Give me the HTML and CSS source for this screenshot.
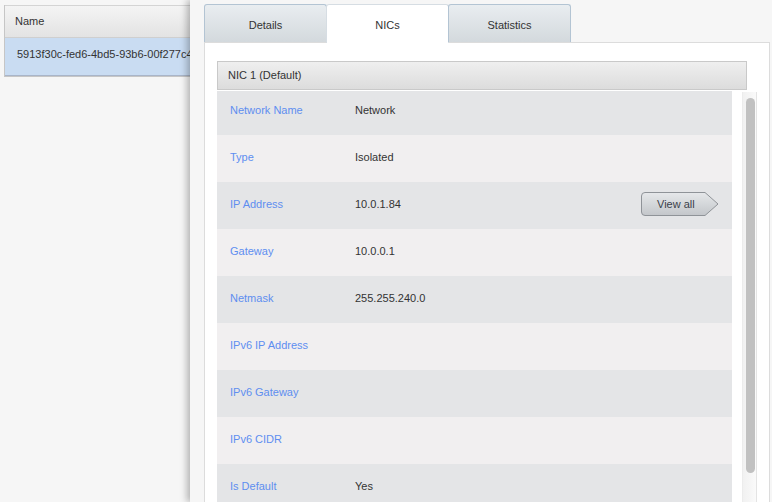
FILE: index.html
```
<!DOCTYPE html>
<html lang="en">
<head>
  <meta charset="UTF-8">
  <title>Instances - NICs</title>
  <link rel="stylesheet" href="styles.css">
</head>
<body>

  <div class="page">
    <div class="list">
      <div class="list-head">Name</div>
      <div class="list-row">5913f30c-fed6-4bd5-93b6-00f277c4c2b1</div>
    </div>

    <div class="panel">
      <div class="tabs">
        <div class="tab">Details</div>
        <div class="tab active">NICs</div>
        <div class="tab">Statistics</div>
      </div>

      <div class="content">
        <div class="nic-head">NIC 1 (Default)</div>
        <div class="nic-body">
          <div class="rows">
            <div class="rows-inner">
              <div class="row"><span class="label">Network Name</span><span class="value">Network</span></div>
              <div class="row"><span class="label">Type</span><span class="value">Isolated</span></div>
              <div class="row">
                <span class="label">IP Address</span><span class="value">10.0.1.84</span>
                <button class="view-all">
                  <svg class="view-all-shape" width="78" height="24" viewBox="0 0 78 24">
                    <defs>
                      <linearGradient id="btnGrad" x1="0" y1="0" x2="0" y2="1">
                        <stop offset="0" stop-color="#e6e8ea"/>
                        <stop offset="1" stop-color="#c3c6ca"/>
                      </linearGradient>
                    </defs>
                    <path d="M4 0.5 H64 L77 12 L64 23.5 H4 Q0.5 23.5 0.5 20 V4 Q0.5 0.5 4 0.5 Z" fill="url(#btnGrad)" stroke="#8f9398"/>
                  </svg>
                  <span>View all</span>
                </button>
              </div>
              <div class="row"><span class="label">Gateway</span><span class="value">10.0.0.1</span></div>
              <div class="row"><span class="label">Netmask</span><span class="value">255.255.240.0</span></div>
              <div class="row"><span class="label">IPv6 IP Address</span><span class="value"></span></div>
              <div class="row"><span class="label">IPv6 Gateway</span><span class="value"></span></div>
              <div class="row"><span class="label">IPv6 CIDR</span><span class="value"></span></div>
              <div class="row"><span class="label">Is Default</span><span class="value">Yes</span></div>
            </div>
          </div>
          <div class="scrollbar"><div class="thumb"></div></div>
        </div>
      </div>
    </div>
  </div>

</body>
</html>
```

FILE: styles.css
```
body {
  margin: 0;
  background: #f6f6f6;
  font-family: "Liberation Sans", Arial, sans-serif;
  font-size: 11px;
  color: #333;
}

.page {
  position: relative;
  width: 772px;
  height: 502px;
  overflow: hidden;
}

/* list behind the panel */
.list {
  margin: 5px 0 0 4px;
  width: 640px;
  border: 1px solid #c6c6c6;
  border-top: 0;
}

.list-head {
  height: 31px;
  line-height: 31px;
  padding-left: 10px;
  border-top: 1px solid #d4d4d4;
  border-bottom: 1px solid #cfcfcf;
  background: linear-gradient(to bottom, #f4f4f4, #e3e3e3);
}

.list-row {
  height: 37px;
  line-height: 33px;
  padding-left: 12px;
  white-space: nowrap;
  background: #c9dcf2;
  border-bottom: 1px solid #a9b5c9;
}

/* detail panel sliding over the list */
.panel {
  position: absolute;
  top: 0;
  left: 190px;
  right: 0;
  bottom: 0;
  display: flex;
  flex-direction: column;
  padding: 4px 2px 0 14px;
  background: #f6f6f6;
  box-shadow: -3px 0 7px rgba(0, 0, 0, 0.28);
}

.tabs {
  display: flex;
  height: 38px;
  position: relative;
  z-index: 1;
}

.tab {
  width: 123px;
  margin-right: -1px;
  box-sizing: border-box;
  padding-top: 2px;
  line-height: 36px;
  text-align: center;
  border: 1px solid #b3c4d3;
  border-bottom: 0;
  border-radius: 3px 3px 0 0;
  background: linear-gradient(to bottom, #e9edf0, #d3d9dd);
}

.tab.active {
  background: #fff;
  border-color: #d6dde3;
  height: 39px;
}

.content {
  flex: 1;
  display: flex;
  flex-direction: column;
  min-height: 0;
  padding: 18px 12px 0 12px;
  background: #fff;
  border: 1px solid #dcdcdc;
  border-bottom: 0;
}

.nic-head {
  height: 27px;
  line-height: 27px;
  margin-right: 10px;
  padding-left: 10px;
  border: 1px solid #c9c9c9;
  background: linear-gradient(to bottom, #efefef, #dcdcdc);
}

.nic-body {
  flex: 1;
  display: flex;
  gap: 10px;
  min-height: 0;
  margin-top: 1px;
}

.rows {
  width: 515px;
  flex-shrink: 0;
  overflow: hidden;
}

.rows-inner {
  margin-top: -3px;
}

.row {
  display: flex;
  align-items: center;
  box-sizing: border-box;
  height: 47px;
  padding: 0 0 3px 13px;
  background: #e4e5e7;
}

.row:nth-child(even) {
  background: #f1eff0;
}

.label {
  width: 125px;
  color: #5e8ef0;
}

.value {
  color: #333;
}

.view-all {
  position: relative;
  margin: 0 13px 0 auto;
  width: 78px;
  height: 24px;
  padding: 0 0 0 16px;
  border: 0;
  background: none;
  text-align: left;
  font-family: inherit;
  font-size: 11px;
  color: #3a3f4a;
  cursor: pointer;
}

.view-all-shape {
  position: absolute;
  top: 0;
  left: 0;
}

.view-all span {
  position: relative;
}

.scrollbar {
  width: 10px;
  margin-top: 1px;
  padding: 6px 0 0 3px;
  border-left: 1px solid #ececec;
  border-right: 1px solid #e4e4e4;
  background: linear-gradient(to right, #f1f1f1, #fafafa);
}

.thumb {
  width: 9px;
  height: 375px;
  border-radius: 5px;
  background: #c1c1c1;
}
```
